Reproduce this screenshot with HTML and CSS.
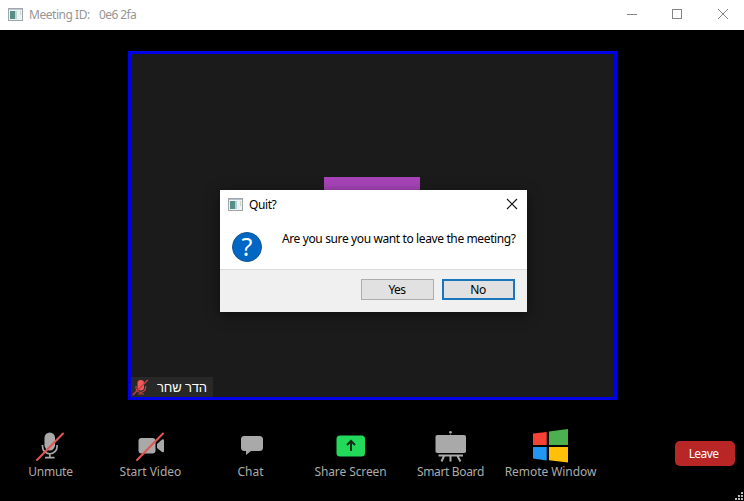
FILE: index.html
```html
<!DOCTYPE html>
<html lang="en">
<head>
<meta charset="utf-8">
<title>Meeting</title>
<link rel="stylesheet" href="styles.css">
</head>
<body>
<div class="window">
  <header class="titlebar">
    <svg class="app-icon faded" width="15" height="13" viewBox="0 0 15 13"><rect x=".5" y=".5" width="14" height="12" fill="#edf2f3" stroke="#a0a7ac"/><path d="M1 1.5h13" stroke="#c0c8d0"/><rect x="2" y="3" width="5" height="8" fill="#568f88"/><rect x="7" y="3" width="2" height="8" fill="#bdd5d4"/><rect x="12" y="3" width="1" height="4" fill="#c5d8c8"/></svg>
    <span class="title">Meeting ID:</span><span class="meeting-code">0e6 2fa</span>
    <svg class="controls" width="102" height="12" viewBox="0 0 102 12" fill="none" stroke="#858585"><path d="M0 6.5h10"/><rect x="45.500" y="1.500" width="9" height="9"/><path d="M91 1l10 10M101 1l-10 10"/></svg>
  </header>
  <main class="stage">
    <section class="video">
      <div class="avatar"></div>
      <div class="name-tag">
        <svg width="18" height="18" viewBox="0 0 18 18"><rect x="5.500" y="2" width="6.500" height="10.500" rx="3.200" fill="#f05a5a"/><path d="M4 8v1.500a4.800 4.800 0 0 0 9.600 0V8M8.800 14v2M6 16h6" fill="none" stroke="#b94747" stroke-width="1.200"/><path d="M.8 17l15-15" stroke="#c34343" stroke-width="1.500"/></svg>
        <span dir="rtl" lang="he">הדר שחר</span>
      </div>
    </section>
  </main>
  <footer class="toolbar">
    <div class="tools">
      <div class="tool"><svg width="40" height="36" viewBox="0 0 40 36"><rect x="14.500" y="4.500" width="10.500" height="18" rx="5.250" fill="#a9a9a9"/><path d="M12.500 17v1.500a7.300 7.300 0 0 0 14.600 0V17M19.800 26v4M15 29.700h9.500" fill="none" stroke="#a9a9a9" stroke-width="1.700"/><path d="M7 32L33 5.500" stroke="#e25552" stroke-width="2" stroke-linecap="round"/></svg><span class="unmute">Unmute</span></div>
      <div class="tool"><svg width="40" height="36" viewBox="0 0 40 36"><rect x="8.500" y="10" width="17" height="15.500" rx="3" fill="#a9a9a9"/><path d="M27 16l5-4.500q2-1 2 1v10.500q0 2-2 1L27 20z" fill="#a9a9a9"/><path d="M7 32L33 5.500" stroke="#e25552" stroke-width="2" stroke-linecap="round"/></svg><span class="start">Start Video</span></div>
      <div class="tool"><svg width="40" height="36" viewBox="0 0 40 36"><path d="M14 8h15.500q3.500 0 3.500 3.500v8q0 3.500-3.500 3.500H21l-5 4v-4h-1.500q-3.500 0-3.500-3.500v-8Q11 8 14 8z" fill="#a9a9a9"/></svg><span class="chat">Chat</span></div>
      <div class="tool"><svg width="40" height="36" viewBox="0 0 40 36"><rect x="6.500" y="7.500" width="28.500" height="21" rx="3.500" fill="#23d959"/><path d="M21 23V13M17 17l4-4 4 4" fill="none" stroke="#102c18" stroke-width="2"/></svg><span class="share">Share Screen</span></div>
      <div class="tool"><svg width="40" height="36" viewBox="0 0 40 36"><circle cx="20.500" cy="4.300" r="1.300" fill="#a9a9a9"/><path d="M20.500 5v3" stroke="#555"/><rect x="5.500" y="7" width="30.500" height="18" rx="1.800" fill="#a9a9a9"/><path d="M8.500 27.500h24.500M14 28l-2.500 5.500M20.500 28v5.500M27.500 28l3 5.500" stroke="#a9a9a9" stroke-width="2"/></svg><span class="board">Smart Board</span></div>
      <div class="tool"><svg width="40" height="36" viewBox="0 0 40 36"><path d="M3 5.500L16.700 4v13H3z" fill="#f44336"/><path d="M19 3.500L38 1v16H19z" fill="#4caf50"/><path d="M3 19h13.700v13.500L3 30.500z" fill="#2196f3"/><path d="M19 19h19v15.500l-19-2.200z" fill="#ffc107"/></svg><span class="remote">Remote Window</span></div>
    </div>
    <button class="leave"><span>Leave</span></button>
  </footer>
  <svg class="grip" width="9" height="9" viewBox="0 0 9 9" fill="#bcbcbc"><path d="M7 1h2v2H7zM4 4h2v2H4zM7 4h2v2H7zM1 7h2v2H1zM4 7h2v2H4zM7 7h2v2H7z"/></svg>
  <div class="dialog" role="dialog">
    <div class="dialog-title">
      <svg class="app-icon" width="15" height="13" viewBox="0 0 15 13"><rect x=".5" y=".5" width="14" height="12" fill="#edf2f3" stroke="#a0a7ac"/><path d="M1 1.500h13" stroke="#b4c0cc"/><rect x="2" y="3" width="5" height="8" fill="#568f88"/><rect x="7" y="3" width="2" height="8" fill="#b7cddd"/><rect x="12" y="3" width="1" height="5" fill="#c5d8b8"/></svg>
      <span class="quit">Quit?</span>
      <svg class="close" width="12" height="12" viewBox="0 0 12 12"><path d="M1 1l10 10M11 1L1 11" stroke="#111" stroke-width="1.100"/></svg>
    </div>
    <div class="dialog-body">
      <div class="question"><span>?</span></div>
      <span class="message">Are you sure you want to leave the meeting?</span>
    </div>
    <div class="dialog-actions"><button class="yes">Yes</button><button class="no">No</button></div>
  </div>
</div>
</body>
</html>
```
FILE: styles.css
```css
* { box-sizing: border-box; }
body { margin: 0; background: #000; font-family: "Noto Sans", "Open Sans", sans-serif; font-size: 12px; }
svg { display: block; flex: none; }
span { white-space: nowrap; }
button { font: inherit; margin: 0; padding: 0; border-radius: 0; }
.window { position: relative; width: 744px; height: 501px; overflow: hidden; display: flex; flex-direction: column; background: #000; }
.titlebar { height: 30px; flex: none; display: flex; align-items: center; padding: 0 15px 2px 8px; background: #fff; color: #969696; }
.title { margin-left: 6px; width: 70px; letter-spacing: -.46px; }
.meeting-code { letter-spacing: -.6px; }
.controls { margin-left: auto; }
.stage { height: 370px; flex: none; padding: 21px 127px 0 128px; }
.video { height: 349px; border: 3px solid #0000e4; background: #1b1b1b; display: flex; flex-direction: column; align-items: center; justify-content: space-between; padding-top: 123px; }
.avatar { width: 96px; height: 96px; margin-right: 2px; background: #a744b8; }
.name-tag { align-self: flex-start; width: 82px; height: 20px; background: #282828; display: flex; align-items: center; padding-left: 1px; gap: 7px; color: #fff; font: 13px "Liberation Sans", sans-serif; letter-spacing: -.15px; }
.toolbar { flex: 1; display: flex; justify-content: space-between; padding: 28px 9px 0 0; }
.tools { display: flex; }
.tool { width: 100px; display: flex; flex-direction: column; align-items: center; color: #ababab; line-height: 16px; }
.tool span { margin-left: 1px; }
.tool .unmute { letter-spacing: -.25px; }
.tool .board { letter-spacing: -.35px; }
.tool .share { letter-spacing: -.1px; }
.tool .remote { letter-spacing: -.06px; }
.leave { width: 60px; height: 25px; margin-top: 13px; border: 0; border-radius: 5px; background: #b82626; color: #fff; letter-spacing: -.6px; padding-right: 3px; }
.grip { position: absolute; right: 1px; bottom: 1px; }
.dialog { position: absolute; left: 220px; top: 190px; width: 307px; height: 122px; display: flex; flex-direction: column; background: #fff; color: #000; box-shadow: 0 3px 12px rgba(0,0,0,.5); }
.dialog-title { height: 28px; display: flex; align-items: center; padding: 0 9px 0 8px; }
.quit { margin-left: 6px; letter-spacing: -.4px; }
.close { margin-left: auto; }
.dialog-body { height: 51px; display: flex; align-items: flex-start; padding: 14px 0 0 12px; }
.question { width: 30px; height: 30px; border: 1px solid #14528e; border-radius: 50%; background: #0067c5; color: #fff; font-size: 25px; line-height: 27px; text-align: center; }
.message { margin-left: 20px; margin-top: -1px; line-height: 16px; letter-spacing: -.38px; }
.dialog-actions { height: 43px; border-top: 1px solid #dcdcdc; background: #f0f0f0; display: flex; justify-content: flex-end; gap: 8px; padding: 9px 12px 0 0; }
.dialog-actions button { width: 73px; height: 21px; border: 1px solid #adadad; background: #e1e1e1; color: #000; line-height: 19px; letter-spacing: -.5px; padding-right: 1px; }
.dialog-actions .no { border: 2px solid #1976bd; line-height: 17px; }
```
